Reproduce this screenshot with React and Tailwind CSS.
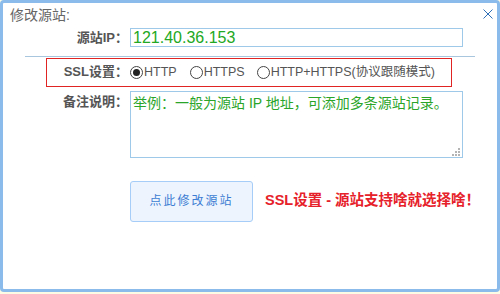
import React from "react";

const Radio = ({ checked }) => (
  <span className="w-[13px] h-[13px] rounded-full border border-[#444] bg-white flex items-center justify-center shrink-0">
    {checked && <span className="w-[7px] h-[7px] rounded-full bg-[#222]" />}
  </span>
);

const App = () => {
  return (
    <div className="w-[500px] h-[294px] bg-[#fdfbe3] font-['Liberation_Sans','Noto_Sans_CJK_SC',sans-serif]">
      <div className="h-[292px] border-[3px] border-[#8bbbea] rounded-[4px] bg-white">
        {/* title */}
        <div className="flex justify-between items-center h-[24px] pl-[7px] pr-[4px]">
          <span className="text-[14px] text-[#666]">修改源站:</span>
          <svg width="10" height="10" viewBox="0 0 10 10" className="-mt-[2px]">
            <line x1="0.5" y1="0.5" x2="9.5" y2="9.5" stroke="#2f6fb8" strokeWidth="1" />
            <line x1="9.5" y1="0.5" x2="0.5" y2="9.5" stroke="#2f6fb8" strokeWidth="1" />
          </svg>
        </div>

        {/* source ip */}
        <div className="flex items-center mt-[1px] gap-[2px]">
          <label className="w-[125px] text-right text-[13px] font-bold text-[#555]">源站IP：</label>
          <div className="w-[333px] h-[19px] border border-[#9fc9e8] flex items-center pl-[2px] text-[16px] text-[#22a822]">
            121.40.36.153
          </div>
        </div>

        <div className="mt-[8px] mx-[22px] h-px bg-[#a9c6df]" />

        {/* ssl setting */}
        <div className="mt-[1px] ml-[43px] w-[406px] h-[29px] border border-[#e02424] flex items-center gap-[2px]">
          <label className="w-[81px] text-right text-[13px] font-bold text-[#555]">SSL设置：</label>
          <div className="flex items-center text-[12.5px] text-[#555] whitespace-nowrap">
            <Radio checked />
            <span className="ml-[1px] mr-[13px]">HTTP</span>
            <Radio />
            <span className="ml-[1px] mr-[12px]">HTTPS</span>
            <Radio />
            <span className="ml-[1px]">HTTP+HTTPS(协议跟随模式)</span>
          </div>
        </div>

        {/* remarks */}
        <div className="flex items-start mt-[4px] gap-[2px]">
          <label className="w-[125px] text-right text-[13px] font-bold text-[#555] leading-[20px] mt-[1px]">备注说明：</label>
          <div className="relative w-[333px] h-[67px] border border-[#9fc9e8] pl-[2px] pt-[1px] text-[14px] leading-[20px] text-[#2aa52a]">
            举例：一般为源站 IP 地址，可添加多条源站记录。
            <svg width="9" height="9" viewBox="0 0 9 9" className="absolute right-[2px] bottom-[1px]">
              <rect x="7" y="1" width="2" height="2" fill="#b4b4b4" />
              <rect x="4" y="4" width="2" height="2" fill="#b4b4b4" />
              <rect x="7" y="4" width="2" height="2" fill="#b4b4b4" />
              <rect x="1" y="7" width="2" height="2" fill="#b4b4b4" />
              <rect x="4" y="7" width="2" height="2" fill="#b4b4b4" />
              <rect x="7" y="7" width="2" height="2" fill="#b4b4b4" />
            </svg>
          </div>
        </div>

        {/* submit */}
        <div className="flex items-center mt-[23px] ml-[127px]">
          <button className="w-[123px] h-[41px] rounded-[3px] border border-[#a6cdf7] bg-[#eef4fe] text-[12px] tracking-[2px] text-[#3c7dd3]">
            点此修改源站
          </button>
          <span className="ml-[12px] text-[14.5px] font-bold text-[#e6212a] whitespace-nowrap">SSL设置 - 源站支持啥就选择啥！</span>
        </div>
      </div>
    </div>
  );
};

export default App;
